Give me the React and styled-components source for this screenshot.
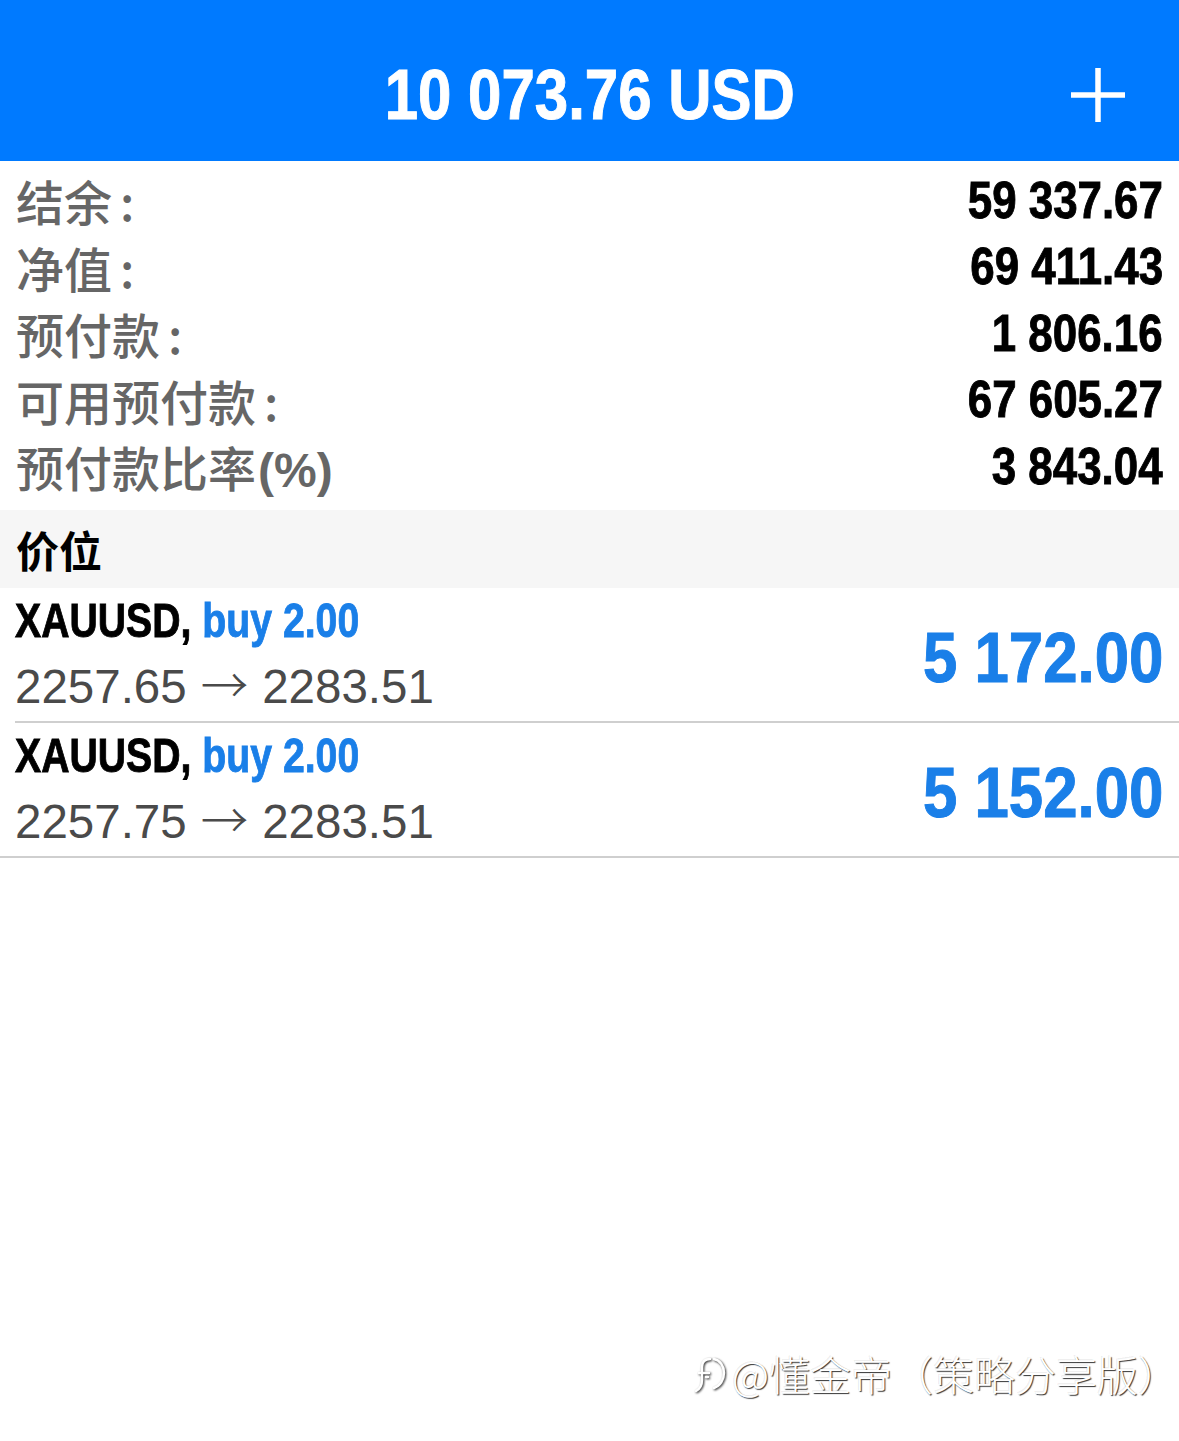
import React from "react";
import styled, { createGlobalStyle } from "styled-components";

const GlobalStyle = createGlobalStyle`
  html, body {
    margin: 0;
    padding: 0;
    background: #ffffff;
  }
  body {
    font-family: "Liberation Sans", "Noto Sans CJK SC", sans-serif;
  }
`;

// no condensed face is installed, so the bold numerals are squeezed
const Condensed = styled.span`
  display: inline-block;
  white-space: nowrap;
  font-family: "Liberation Sans", "Noto Sans CJK SC", sans-serif;
  font-weight: 700;
  -webkit-text-stroke: ${(p) => p.$stroke || "0.9px"} currentColor;
  transform: scaleX(${(p) => p.$scale || 0.86});
  transform-origin: ${(p) => p.$origin || "left"} center;
`;

const Page = styled.div`
  width: 1179px;
  height: 1441px;
  display: flex;
  flex-direction: column;
  background: #fff;
`;

const Header = styled.header`
  height: 161px;
  background: #007aff;
  display: grid;
  grid-template-columns: 1fr auto 1fr;
  align-items: center;
  padding-top: 28px;
  box-sizing: border-box;
`;

const Balance = styled.h1`
  grid-column: 2;
  margin: 0;
  color: #fff;
  font-size: 71px;
  line-height: 1;
  font-weight: 700;
`;

const PlusButton = styled.button`
  justify-self: end;
  margin-right: 52px;
  width: 58px;
  height: 58px;
  border: 0;
  padding: 0;
  background: transparent;
  display: flex;
  align-items: center;
  justify-content: center;
`;

const Stats = styled.section`
  display: flex;
  flex-direction: column;
  padding: 6px 16px 0 16px;
  height: 349px;
  box-sizing: border-box;
`;

const StatRow = styled.div`
  display: flex;
  justify-content: space-between;
  align-items: center;
  height: 66.5px;
`;

const StatLabel = styled.span`
  color: #666666;
  font-family: "Noto Sans CJK SC", sans-serif;
  font-weight: 500;
  font-size: 48px;
`;

const Colon = styled.span`
  margin-left: 8px;
`;

const Paren = styled.span`
  font-family: "Liberation Sans", sans-serif;
  font-weight: 700;
  margin-left: 2px;
`;

const StatValue = styled.span`
  color: #000;
  font-size: 51px;
`;

const SectionTitle = styled.div`
  height: 78px;
  background: #f6f6f6;
  display: flex;
  align-items: center;
  padding-left: 16px;
  color: #000;
  font-family: "Noto Sans CJK SC", sans-serif;
  font-weight: 700;
  font-size: 43px;
`;

const Position = styled.div`
  height: 135px;
  box-sizing: border-box;
  margin-left: ${(p) => (p.$last ? "0" : "15px")};
  padding-left: ${(p) => (p.$last ? "15px" : "0")};
  padding-right: 16px;
  border-bottom: 2px solid #cfcfcf;
  display: flex;
  align-items: center;
  justify-content: space-between;
`;

const PosInfo = styled.div`
  display: flex;
  flex-direction: column;
  gap: 4px;
  margin-top: -4px;
`;

const Symbol = styled.div`
  font-size: 49px;
  color: #000;
  line-height: 60px;
`;

const Side = styled.span`
  color: #1a7fe8;
`;

const Prices = styled.div`
  display: flex;
  align-items: baseline;
  font-family: "Liberation Sans", "Noto Sans CJK SC", sans-serif;
  font-size: 47.5px;
  color: #4a4a4a;
  line-height: 58px;
`;

const Arrow = styled.span`
  font-family: "Noto Sans CJK SC", sans-serif;
  font-weight: 300;
  margin: 0 14px;
`;

const Profit = styled.div`
  font-size: 71px;
  color: #1a7fe8;
  margin-top: 6px;
`;

const Spacer = styled.div`
  flex: 1;
`;

const Watermark = styled.div`
  align-self: flex-end;
  margin: 0 0 38px 0;
  display: flex;
  align-items: center;
  gap: 2px;
  color: #ffffff;
  font-family: "Noto Sans CJK SC", sans-serif;
  font-weight: 300;
  font-size: 41px;
  text-shadow: 1px 1px 1px rgba(0, 0, 0, 0.8), -1px -1px 0 rgba(0, 0, 0, 0.08);
`;

const stats = [
  ["结余", "59 337.67"],
  ["净值", "69 411.43"],
  ["预付款", "1 806.16"],
  ["可用预付款", "67 605.27"],
  ["预付款比率", "3 843.04", "(%)"],
];

const positions = [
  { open: "2257.65", close: "2283.51", profit: "5 172.00" },
  { open: "2257.75", close: "2283.51", profit: "5 152.00" },
];

function Plus() {
  return (
    <svg width="56" height="56" viewBox="0 0 56 56">
      <path d="M28 1v54M1 28h54" stroke="#fff" strokeWidth="5.5" />
    </svg>
  );
}

function LogoMark() {
  return (
    <svg
      width="40"
      height="44"
      viewBox="0 0 40 44"
      style={{ filter: "drop-shadow(1px 1px 1px rgba(0,0,0,0.85))" }}
    >
      <path
        d="M6 40c4-2 6-6 6-11V16c0-5 3-8 8-8M9 22h10M24 8c6 1 10 7 10 14s-4 13-10 15M16 26h2"
        fill="none"
        stroke="#fff"
        strokeWidth="2.4"
        strokeLinecap="round"
      />
    </svg>
  );
}

export default function App() {
  return (
    <Page>
      <GlobalStyle />
      <Header>
        <Balance>
          <Condensed $scale={0.845} $origin="center" $stroke="1px">
            10 073.76 USD
          </Condensed>
        </Balance>
        <PlusButton>
          <Plus />
        </PlusButton>
      </Header>
      <Stats>
        {stats.map(([label, value, suffix]) => (
          <StatRow key={label}>
            <StatLabel>
              {label}
              {suffix ? <Paren>{suffix}</Paren> : <Colon>:</Colon>}
            </StatLabel>
            <StatValue>
              <Condensed $scale={0.86} $origin="right">
                {value}
              </Condensed>
            </StatValue>
          </StatRow>
        ))}
      </Stats>
      <SectionTitle>价位</SectionTitle>
      {positions.map((p, i) => (
        <Position key={i} $last={i === positions.length - 1}>
          <PosInfo>
            <Symbol>
              <Condensed $scale={0.8}>
                XAUUSD, <Side>buy 2.00</Side>
              </Condensed>
            </Symbol>
            <Prices>
              <span>{p.open}</span>
              <Arrow>→</Arrow>
              <span>{p.close}</span>
            </Prices>
          </PosInfo>
          <Profit>
            <Condensed $scale={0.87} $origin="right" $stroke="1px">
              {p.profit}
            </Condensed>
          </Profit>
        </Position>
      ))}
      <Spacer />
      <Watermark>
        <LogoMark />
        <span>@懂金帝（策略分享版）</span>
      </Watermark>
    </Page>
  );
}
